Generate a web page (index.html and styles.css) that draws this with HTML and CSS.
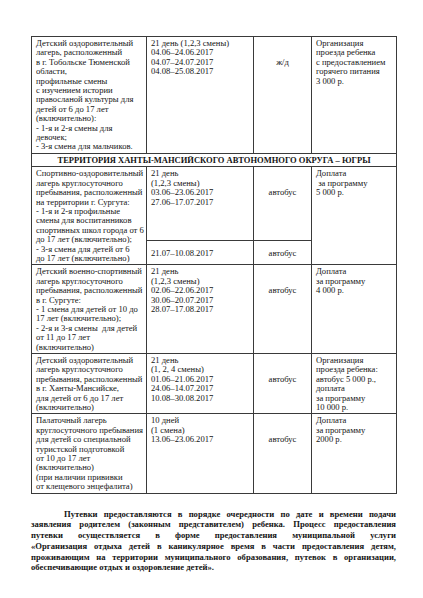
FILE: index.html
```html
<!DOCTYPE html>
<html lang="ru">
<head>
<meta charset="utf-8">
<title>Лагеря</title>
<link rel="stylesheet" href="styles.css">
</head>
<body>
<div class="page">
<table class="camps">
<colgroup><col class="c1"><col class="c2"><col class="c3"><col class="c4"></colgroup>
<tr>
<td>Детский оздоровительный<br>лагерь, расположенный<br>в г. Тобольске Тюменской<br>области,<br>профильные смены<br>с изучением истории<br>правосланой культуры для<br>детей от 6 до 17 лет<br>(включительно):<br>- 1-я и 2-я смены для<br>девочек;<br>- 3-я смена для мальчиков.</td>
<td>21 день (1,2,3 смены)<br>04.06–24.06.2017<br>04.07–24.07.2017<br>04.08–25.08.2017</td>
<td class="tr">ж/д</td>
<td>Организация<br>проезда ребенка<br>с предоставлением<br>горячего питания<br>3 000 р.</td>
</tr>
<tr><td colspan="4" class="region">ТЕРРИТОРИЯ ХАНТЫ-МАНСИЙСКОГО АВТОНОМНОГО ОКРУГА – ЮГРЫ</td></tr>
<tr>
<td rowspan="2">Спортивно-оздоровительный<br>лагерь круглосуточного<br>пребывания, расположенный<br>на территории г. Сургута:<br>- 1-я и 2-я профильные<br>смены для воспитанников<br>спортивных школ города от 6<br>до 17 лет (включительно);<br>- 3-я смена для детей от 6<br>до 17 лет (включительно)</td>
<td>21 день<br>(1,2,3 смены)<br>03.06–23.06.2017<br>27.06–17.07.2017</td>
<td class="tr">автобус</td>
<td rowspan="2">Доплата<br>&nbsp;за программу<br>5 000 р.</td>
</tr>
<tr>
<td class="mid">21.07–10.08.2017</td>
<td class="mid ctr">автобус</td>
</tr>
<tr>
<td>Детский военно-спортивный<br>лагерь круглосуточного<br>пребывания, расположенный<br>в г. Сургуте:<br>- 1 смена для детей от 10 до<br>17 лет (включительно);<br>- 2-я и 3-я смены &nbsp;для детей<br>от 11 до 17 лет<br>(включительно)</td>
<td>21 день<br>(1,2,3 смены)<br>02.06–22.06.2017<br>30.06–20.07.2017<br>28.07–17.08.2017</td>
<td class="tr">автобус</td>
<td>Доплата<br>за программу<br>4 000 р.</td>
</tr>
<tr>
<td>Детский оздоровительный<br>лагерь круглосуточного<br>пребывания, расположенный<br>в г. Ханты-Мансийске,<br>для детей от 6 до 17 лет<br>(включительно)</td>
<td>21 день<br>(1, 2, 4 смены)<br>01.06–21.06.2017<br>24.06–14.07.2017<br>10.08–30.08.2017</td>
<td class="tr">автобус</td>
<td>Организация<br>проезда ребенка:<br>автобус 5 000 р.,<br>доплата<br>за программу<br>10 000 р.</td>
</tr>
<tr>
<td>Палаточный лагерь<br>круглосуточного пребывания<br>для детей со специальной<br>туристской подготовкой<br>от 10 до 17 лет<br>(включительно)<br>(при наличии прививки<br>от клещевого энцефалита)</td>
<td>10 дней<br>(1 смена)<br>13.06–23.06.2017</td>
<td class="tr">автобус</td>
<td>Доплата<br>за программу<br>2000 р.</td>
</tr>
</table>
<div class="note">
<p class="ln first">Путевки предоставляются в порядке очередности по дате и времени подачи</p>
<p class="ln">заявления родителем (законным представителем) ребенка. Процесс предоставления</p>
<p class="ln">путевки осуществляется в форме предоставления муниципальной услуги</p>
<p class="ln">«Организация отдыха детей в каникулярное время в части предоставления детям,</p>
<p class="ln">проживающим на территории муниципального образования, путевок в организации,</p>
<p class="ln last">обеспечивающие отдых и оздоровление детей».</p>
</div>
</div>
</body>
</html>
```
FILE: styles.css
```css
html, body {
  margin: 0;
  padding: 0;
  background: #fff;
}
.page {
  padding: 36px 0 0 31px;
  width: 365px;
  font-family: "Liberation Serif", "Times New Roman", serif;
  color: #141414;
}
.camps {
  width: 365px;
  table-layout: fixed;
  border-collapse: collapse;
  font-size: 8.6px;
  line-height: 9.4px;
}
.c1 { width: 115px; }
.c2 { width: 107px; }
.c3 { width: 58px; }
.c4 { width: 85px; }
.camps td {
  border: 1px solid #3a3a3a;
  vertical-align: top;
  padding: 2px 2px 1px 4px;
  white-space: nowrap;
  overflow: hidden;
}
.camps td.tr {
  text-align: center;
  padding-top: 20.8px;
  padding-left: 2px;
}
.camps td.mid {
  vertical-align: middle;
}
.camps td.ctr {
  text-align: center;
  padding-left: 2px;
}
.camps td.region {
  font-weight: bold;
  text-align: center;
  font-size: 8.5px;
  padding: 2px 2px 1px 2px;
}
.note {
  margin-top: 15px;
  font-weight: bold;
  font-size: 8.6px;
  line-height: 10.7px;
}
.ln {
  margin: 0;
  text-align: justify;
  text-align-last: justify;
  white-space: nowrap;
}
.ln.first {
  text-indent: 33px;
}
.ln.last {
  text-align-last: left;
}
```
